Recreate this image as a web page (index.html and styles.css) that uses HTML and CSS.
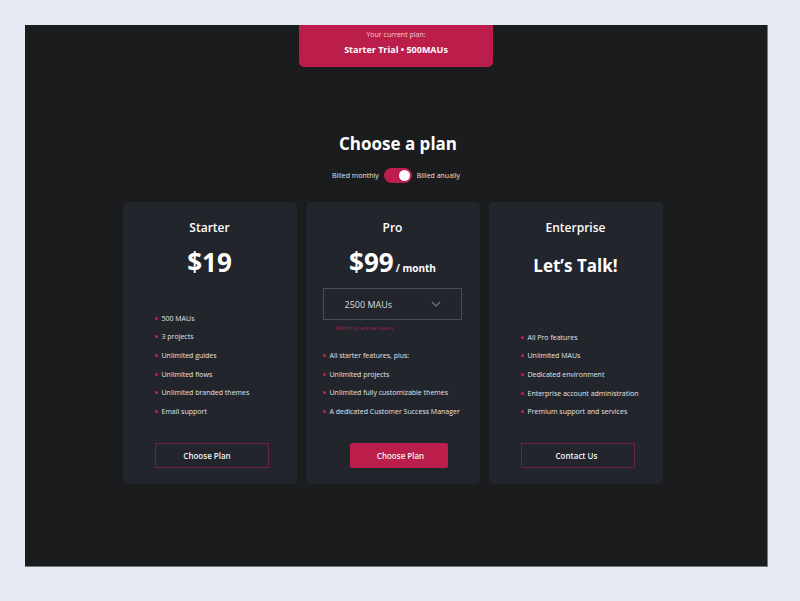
FILE: index.html
```html
<!DOCTYPE html>
<html lang="en">
<head>
<meta charset="utf-8">
<meta name="viewport" content="width=device-width, initial-scale=1">
<title>Choose a plan</title>
<link rel="stylesheet" href="styles.css">
</head>
<body>
<div class="page">
  <header class="current">
    <p class="current-label">Your current plan:</p>
    <p class="current-plan">Starter Trial • 500MAUs</p>
  </header>
  <main>
    <h1>Choose a plan</h1>
    <div class="billing">
      <span>Billed monthly</span>
      <input class="switch" type="checkbox" id="annual" checked>
      <label for="annual">Billed anually</label>
    </div>
    <div class="plans">
      <section class="card">
        <h2>Starter</h2>
        <p class="price">$19</p>
        <ul class="features six">
          <li>500 MAUs</li>
          <li>3 projects</li>
          <li>Unlimited guides</li>
          <li>Unlimited flows</li>
          <li>Unlimited branded themes</li>
          <li>Email support</li>
        </ul>
        <button class="button starter" type="button">Choose Plan</button>
      </section>
      <section class="card pro">
        <h2>Pro</h2>
        <p class="price">$99<span class="period">/ month</span></p>
        <div class="field">
          <div class="select">
            <select id="mau"><option>2500 MAUs</option></select>
            <svg class="chevron" viewBox="0 0 10 6" aria-hidden="true"><path d="M1 1l4 4 4-4"/></svg>
          </div>
          <label for="mau">Monthly active users</label>
        </div>
        <ul class="features four">
          <li>All starter features, plus:</li>
          <li>Unlimited projects</li>
          <li>Unlimited fully customizable themes</li>
          <li>A dedicated Customer Success Manager</li>
        </ul>
        <button class="button primary" type="button">Choose Plan</button>
      </section>
      <section class="card">
        <h2>Enterprise</h2>
        <p class="price talk">Let’s Talk!</p>
        <ul class="features five">
          <li>All Pro features</li>
          <li>Unlimited MAUs</li>
          <li>Dedicated environment</li>
          <li>Enterprise account administration</li>
          <li>Premium support and services</li>
        </ul>
        <button class="button" type="button">Contact Us</button>
      </section>
    </div>
  </main>
</div>
</body>
</html>
```
FILE: styles.css
```css
* { box-sizing: border-box; }

body {
  margin: 0;
  min-height: 100vh;
  padding: 25px 32px 34px 25px;
  display: flex;
  background: #e6ebf3;
  color: #fff;
  font-family: "Open Sans", sans-serif;
  font-size: 7px;
}

h1, h2, p, ul { margin: 0; }

.page {
  flex: 1;
  background: #1b1c1d;
  border: solid #77787a;
  border-width: 0 1px 1px 0;
}

.current {
  width: 194px;
  margin: 0 auto;
  padding: 4px 0 10px;
  border-radius: 0 0 5px 5px;
  background: #bb1e4a;
  text-align: center;
}

.current-label { line-height: 11px; color: #f3d2dc; }
.current-plan { margin-top: 3px; font-size: 9px; line-height: 14px; font-weight: 700; }

h1 {
  margin-top: 65px;
  padding-left: 4px;
  font-size: 17px;
  line-height: 24px;
  font-weight: 700;
  text-align: center;
}

.billing {
  margin-top: 12px;
  display: flex;
  justify-content: center;
  align-items: center;
  gap: 5px;
  color: #e2e3e4;
}

.switch {
  appearance: none;
  width: 28px;
  height: 15px;
  margin: 0;
  padding: 2px;
  display: flex;
  align-items: center;
  border-radius: 8px;
  background: #55575c;
}

.switch::before {
  content: "";
  width: 11px;
  height: 11px;
  border-radius: 50%;
  background: #fff;
}

.switch:checked { background: #bb1e4a; justify-content: flex-end; }

.plans {
  margin-top: 19px;
  padding-right: 7px;
  display: grid;
  grid-template-columns: repeat(3, 174px);
  justify-content: center;
  column-gap: 9px;
}

.card {
  min-height: 282px;
  padding: 17px 17px 16px 32px;
  display: flex;
  flex-direction: column;
  align-items: flex-start;
  border-radius: 5px;
  background: #23252d;
}

.card.pro { padding: 17px 6px 16px 17px; }

h2, .price { align-self: center; }

h2 {
  font-size: 12px;
  line-height: 17px;
  font-weight: 600;
}

.card:not(.pro) > h2, .card:not(.pro) > .price { margin-right: 15px; }
.pro > h2, .pro > .price { margin-right: 11px; }

.price {
  height: 36px;
  margin-top: 8px;
  font-size: 26px;
  line-height: 36px;
  font-weight: 700;
  white-space: nowrap;
}

.talk { font-size: 17px; line-height: 43px; }
.period { margin-left: 2px; font-size: 10px; }

.field {
  width: 139px;
  margin-top: 8px;
  color: #a81f49;
  font-size: 6px;
}

.field label { display: block; padding-left: 13px; line-height: 16px; }

.select { position: relative; }

select {
  appearance: none;
  display: block;
  width: 100%;
  height: 32px;
  padding: 0 21px;
  border: 1px solid #494b50;
  border-radius: 0;
  background: transparent;
  color: #dcdddf;
  font: 9px "Open Sans", sans-serif;
}

.chevron {
  position: absolute;
  top: 13px;
  right: 21px;
  width: 10px;
  height: 6px;
  fill: none;
  stroke: #6d6f75;
  stroke-width: 1.4;
  pointer-events: none;
}

.features {
  margin-top: auto;
  padding: 0;
  display: grid;
  grid-auto-rows: 1fr;
  list-style: none;
  color: #e2e3e4;
  white-space: nowrap;
}

.six { height: 112px; }
.five { height: 93px; }
.four { height: 75px; }

.features li { display: flex; align-items: center; gap: 4px; }

.features li::before {
  content: "";
  width: 3px;
  height: 3px;
  border-radius: 50%;
  background: #c51f4e;
}

.button {
  width: 114px;
  height: 25px;
  margin-top: 22px;
  padding: 0 2px 0 0;
  border: 1px solid #6d2040;
  border-radius: 0;
  background: transparent;
  color: #f1f1f2;
  font: 600 8px "Open Sans", sans-serif;
}

.starter { padding-right: 9px; }

.primary {
  width: 98px;
  margin-left: 27px;
  padding: 0 0 0 4px;
  border: 0;
  border-radius: 2px;
  background: #bb1e4a;
}
```
